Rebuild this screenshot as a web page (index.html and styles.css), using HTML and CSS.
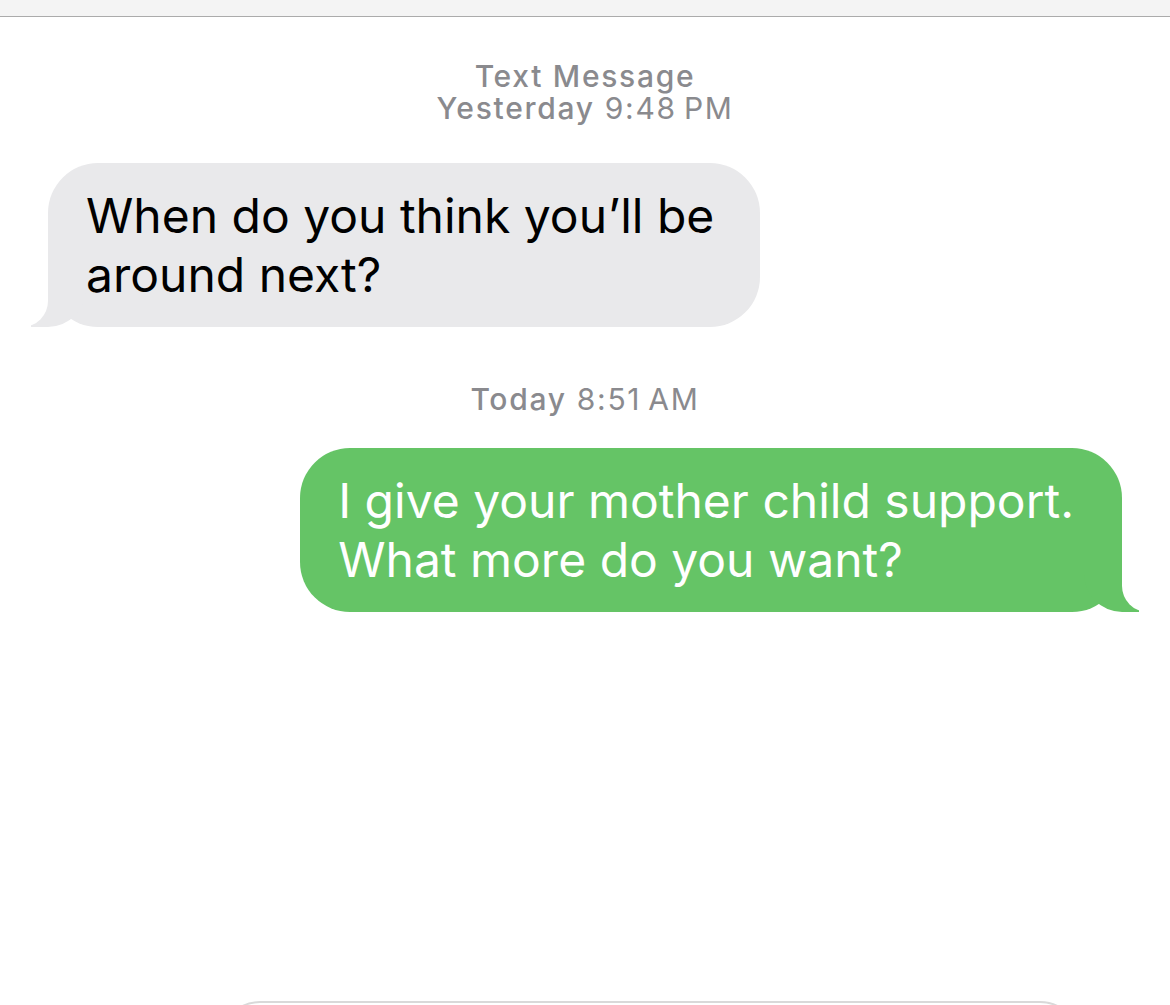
FILE: index.html
```html
<!DOCTYPE html>
<html>
<head>
    <title>Messages</title>
    <link rel="stylesheet" href="styles.css">
</head>
<body>
    <div class="top-bar"></div>

    <div class="thread">
        <div class="stamp stamp-first">
            <div class="stamp-label">Text Message</div>
            <div><span class="stamp-day">Yesterday</span> 9:48&#8201;PM</div>
        </div>

        <div class="row row-them">
            <div class="bubble them">When do you think you’ll be<br>around next?</div>
        </div>

        <div class="stamp stamp-today">
            <div><span class="stamp-day">Today</span> 8:51&#8201;AM</div>
        </div>

        <div class="row row-me">
            <div class="bubble me">I give your mother child support.<br>What more do you want?</div>
        </div>
    </div>

    <div class="compose">
        <div class="compose-field"></div>
    </div>
</body>
</html>
```

FILE: styles.css
```css
html, body {
    height: 100%;
}

body {
    background-color: #ffffff;
    font-family: Inter, "Liberation Sans", Arial, sans-serif;
    margin: 0;
    padding: 0;
    display: flex;
    flex-direction: column;
    overflow: hidden;
}

.top-bar {
    height: 16px;
    background-color: #f4f4f4;
    border-bottom: 1px solid #ababab;
    flex-shrink: 0;
}

.thread {
    flex: 1;
    display: flex;
    flex-direction: column;
}

.stamp {
    text-align: center;
    color: #8a8a8e;
    font-size: 30px;
    line-height: 32px;
    letter-spacing: 1.7px;
    font-weight: 400;
}

.stamp-label,
.stamp-day {
    font-weight: 500;
}

.stamp-first {
    margin-top: 43px;
    margin-bottom: 39px;
}

.stamp-today {
    margin-top: 56px;
    margin-bottom: 33px;
}

.row {
    display: flex;
    padding: 0 48px;
}

.row-me {
    justify-content: flex-end;
}

.bubble {
    position: relative;
    box-sizing: border-box;
    padding: 23px 46px 23px 38px;
    font-size: 48px;
    line-height: 59px;
    border-radius: 50px;
}

.them {
    background-color: #e9e9eb;
    color: #000;
}

.me {
    background-color: #65c466;
    color: #fff;
    padding-right: 48px;
}

/* tails */
.bubble::before,
.bubble::after {
    content: "";
    position: absolute;
    bottom: 0;
    height: 50px;
}

.them::before {
    left: -17px;
    width: 55px;
    background-color: #e9e9eb;
    border-bottom-right-radius: 38px;
}

.them::after {
    left: -26px;
    width: 26px;
    background-color: #fff;
    border-bottom-right-radius: 26px;
}

.me::before {
    right: -17px;
    width: 55px;
    background-color: #65c466;
    border-bottom-left-radius: 38px;
}

.me::after {
    right: -26px;
    width: 26px;
    background-color: #fff;
    border-bottom-left-radius: 26px;
}

.compose {
    height: 4px;
    overflow: hidden;
    flex-shrink: 0;
    padding: 0 90px 0 220px;
}

.compose-field {
    height: 80px;
    border: 2px solid #d9d9d9;
    border-radius: 40px;
}
```
